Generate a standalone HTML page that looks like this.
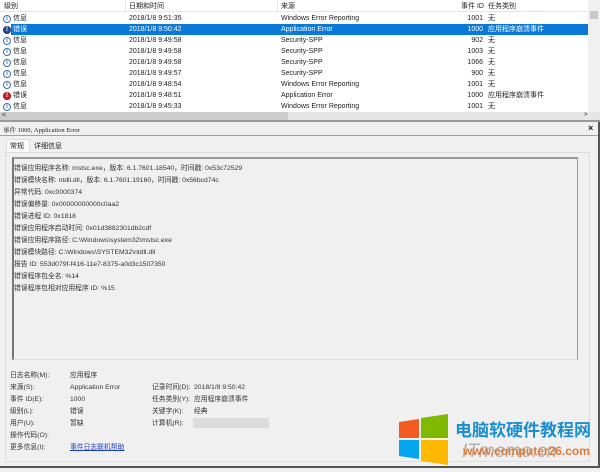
<!DOCTYPE html>
<html><head><meta charset="utf-8"><style>
*{margin:0;padding:0;box-sizing:border-box}
body{width:604px;height:472px;overflow:hidden;background:#fff;font-family:"Liberation Sans","Noto Sans CJK SC",sans-serif;font-size:7px;color:#222;position:relative}
.a{position:absolute;white-space:nowrap;line-height:9px}
.row{position:absolute;left:0;width:588px;height:11px;line-height:11px}
.ic{position:absolute;left:3px;width:8px;height:8px;border-radius:50%;border:1px solid #3b6fb0;background:#fff;font-size:6px;line-height:6px;text-align:center;color:#3b6fb0;font-weight:bold}
.sel{background:#0a78d7;color:#fff}
</style></head><body>
<div class="a" style="left:0;top:0;width:588px;height:12px;border-bottom:1px solid #e5e5e5"></div>
<div class="a" style="left:4px;top:2px">级别</div>
<div class="a" style="left:129px;top:2px">日期和时间</div>
<div class="a" style="left:281px;top:2px">来源</div>
<div class="a" style="left:461px;top:2px">事件 ID</div>
<div class="a" style="left:488px;top:2px">任务类别</div>
<div class="a" style="left:125px;top:0;width:1px;height:12px;background:#e5e5e5"></div>
<div class="a" style="left:277px;top:0;width:1px;height:12px;background:#e5e5e5"></div>

<div id="rows"></div>
<script>
var d=[["信息","9:51:35","Windows Error Reporting","1001","无",0],["错误","9:50:42","Application Error","1000","应用程序崩溃事件",2],["信息","9:49:58","Security-SPP","902","无",0],["信息","9:49:58","Security-SPP","1003","无",0],["信息","9:49:58","Security-SPP","1066","无",0],["信息","9:49:57","Security-SPP","900","无",0],["信息","9:48:54","Windows Error Reporting","1001","无",0],["错误","9:48:51","Application Error","1000","应用程序崩溃事件",1],["信息","9:45:33","Windows Error Reporting","1001","无",0]];
var h="";d.forEach(function(r,i){var t=13+i*11;var s=r[5]==2;
var icst=r[5]==1?"background:#d0202a;border-color:#a01010;color:#fff":(r[5]==2?"background:#2a4f9a;border-color:#1a3070;color:#fff":"");
h+='<div class="row'+(s?' sel':'')+'" style="top:'+t+'px;'+(s?'left:11px;width:577px':'')+'"></div>';
h+='<div class="ic" style="top:'+(t+1.5)+'px;'+icst+'">'+(r[5]?'!':'i')+'</div>';
var c=s?'color:#fff;':'';
h+='<div class="a" style="'+c+'left:13px;top:'+(t+1)+'px">'+r[0]+'</div>';
h+='<div class="a" style="'+c+'left:129px;top:'+(t+1)+'px">2018/1/8 '+r[1]+'</div>';
h+='<div class="a" style="'+c+'left:281px;top:'+(t+1)+'px">'+r[2]+'</div>';
h+='<div class="a" style="'+c+'right:121px;top:'+(t+1)+'px">'+r[3]+'</div>';
h+='<div class="a" style="'+c+'left:488px;top:'+(t+1)+'px">'+r[4]+'</div>';});
document.getElementById('rows').innerHTML=h;
</script>
<div class="a" style="left:588px;top:0;width:12px;height:112px;background:#f0f0f0"></div>
<div class="a" style="left:590px;top:11px;width:8px;height:8px;background:#c8c8c8"></div>
<div class="a" style="left:0;top:112px;width:600px;height:8px;background:#e6e6e6"></div>
<div class="a" style="left:0;top:112px;width:288px;height:8px;background:#cdcdcd"></div>
<div class="a" style="left:2px;top:111px">&lt;</div>
<div class="a" style="left:584px;top:111px;font-size:6px">&gt;</div>
<div class="a" style="left:0;top:120px;width:600px;height:352px;background:#f0f0f0;border-top:2px solid #9a9a9a"></div>
<div class="a" style="left:0;top:122px;width:600px;height:14px;border-bottom:1px solid #a0a0a0"></div>
<div class="a" style="left:3px;top:126px;font-family:'Liberation Serif','Noto Serif CJK SC',serif;font-size:6.5px">事件 1000, Application Error</div>
<div class="a" style="left:588px;top:124px;font-size:9px;font-weight:bold">×</div>
<div class="a" style="left:598px;top:122px;width:2px;height:346px;background:#555"></div>
<div class="a" style="left:0;top:466px;width:600px;height:2px;background:#555"></div>
<div class="a" style="left:6px;top:139px;width:24px;height:14px;background:#fafafa;border:1px solid #ddd;border-bottom:none"></div>
<div class="a" style="left:10px;top:142px">常规</div>
<div class="a" style="left:34px;top:142px">详细信息</div>
<div class="a" style="left:5px;top:152px;width:585px;height:310px;border:1px solid #ddd;background:#f0f0f0"></div>
<div class="a" style="left:12px;top:157px;width:566px;height:203px;border:1px solid #9a9a9a;border-bottom:1px solid #ddd;background:#f0f0f0;border-left:2px solid #777;border-top:2px solid #999"></div>
<div class="a" style="left:14px;top:163px;line-height:12px;font-size:6.8px;color:#333">错误应用程序名称: mstsc.exe，版本: 6.1.7601.18540，时间戳: 0x53c72529<br>错误模块名称: ntdll.dll，版本: 6.1.7601.19160，时间戳: 0x56bcd74c<br>异常代码: 0xc0000374<br>错误偏移量: 0x00000000000c0aa2<br>错误进程 ID: 0x1818<br>错误应用程序启动时间: 0x01d3882301db2cdf<br>错误应用程序路径: C:\Windows\system32\mstsc.exe<br>错误模块路径: C:\Windows\SYSTEM32\ntdll.dll<br>报告 ID: 553d079f-f416-11e7-8375-a0d3c1507350<br>错误程序包全名: %14<br>错误程序包相对应用程序 ID: %15</div>
<div class="a" style="left:10px;top:370px;line-height:12px;font-size:6.8px;color:#333">日志名称(M):<br>来源(S):<br>事件 ID(E):<br>级别(L):<br>用户(U):<br>操作代码(O):<br>更多信息(I):</div>
<div class="a" style="left:70px;top:370px;line-height:12px;font-size:6.8px;color:#333">应用程序<br>Application Error<br>1000<br>错误<br>暂缺<br><br><span style="color:#1a3ccc;text-decoration:underline">事件日志联机帮助</span></div>
<div class="a" style="left:152px;top:382px;line-height:12px;font-size:6.8px;color:#333">记录时间(D):<br>任务类别(Y):<br>关键字(K):<br>计算机(R):</div>
<div class="a" style="left:194px;top:382px;line-height:12px;font-size:6.8px;color:#333">2018/1/8 9:50:42<br>应用程序崩溃事件<br>经典</div>
<div class="a" style="left:193px;top:418px;width:76px;height:10px;background:#dcdcdc"></div>
<svg class="a" style="left:399px;top:414px" width="52" height="52" viewBox="0 0 52 52">
<polygon points="0,8 20,5 20,24 0,24" fill="#f25a22"/>
<polygon points="22,4 49,0 49,24 22,24" fill="#7fba00"/>
<polygon points="0,26 20,26 20,45 0,42" fill="#05a6f0"/>
<polygon points="22,26 49,26 49,51 22,47" fill="#ffba00"/>
</svg>
<div class="a" style="left:462px;top:441px;font-size:19px;line-height:22px;font-style:italic;color:#b0b0b0">ITmemo.cn</div>
<div class="a" style="left:455px;top:421px;font-size:17px;line-height:20px;font-weight:bold;color:#1a8fd0">电脑软硬件教程网</div>
<div class="a" style="left:463px;top:444px;font-size:12px;line-height:14px;font-weight:bold;color:#e07a3a">www.computer26.com</div>
</body></html>
